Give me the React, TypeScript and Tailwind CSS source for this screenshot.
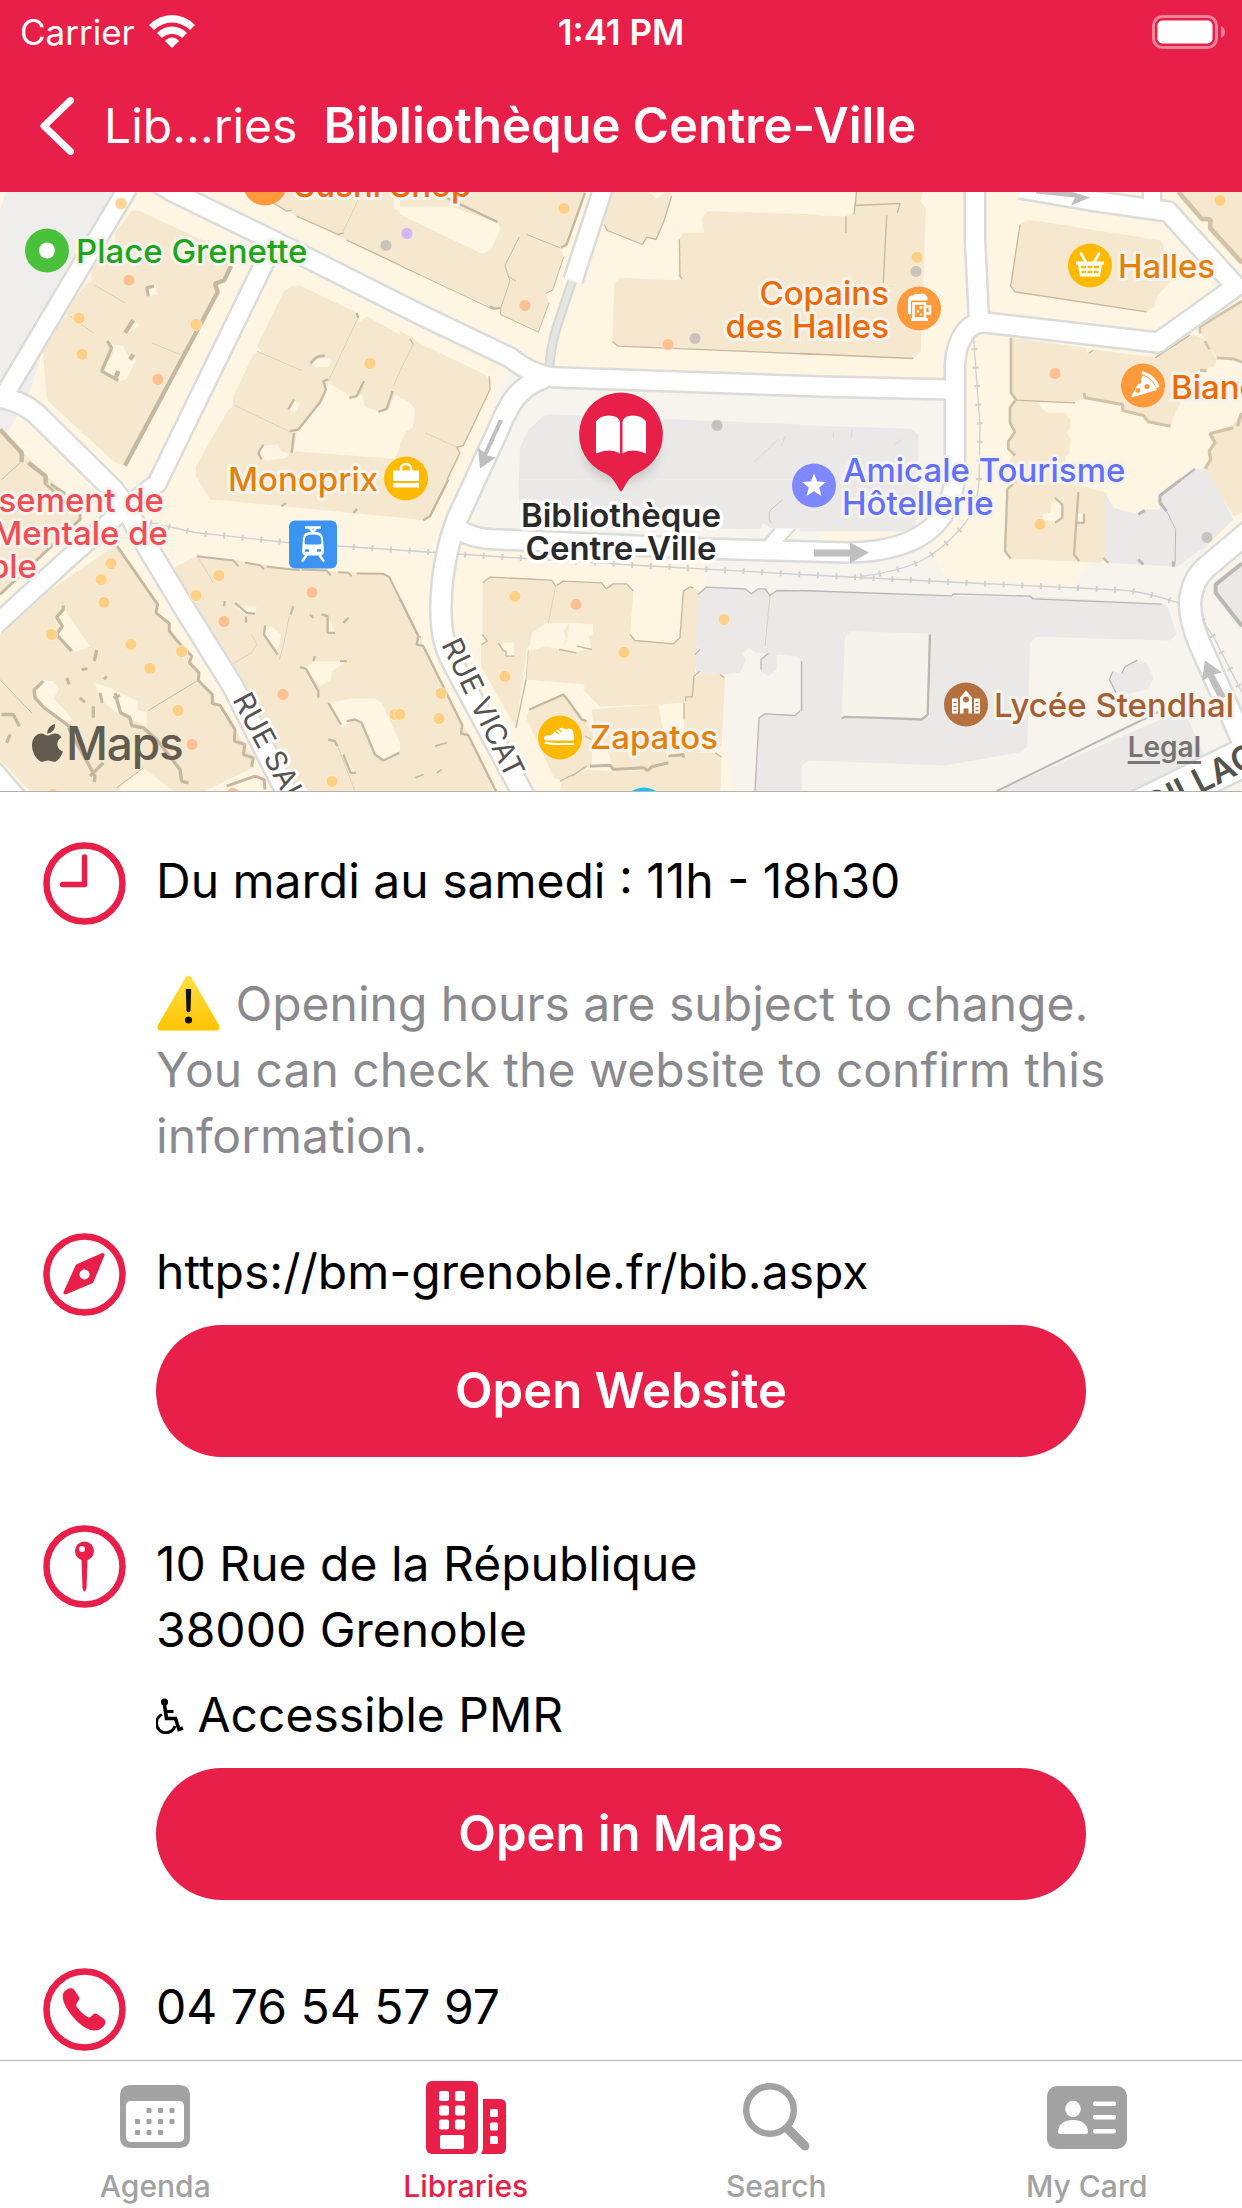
import type { ReactNode } from "react";

const LAND = "#f6e8ce";
const CREAM = "#fff5e3";
const GROUND = "#f6f4ec";
const GREY = "#eae9e7";
const SHADOW = "#c6b8a0";
const GREY_SHADOW = "#b9b8b5";

/* ---------- map data ---------- */

type Tile = {
  x: number;
  y: number;
  shapes: [string, string][];
  edges: [string, number, string][];
  dots: [number, number, string][];
};

const Y = "#fdd085";
const O = "#fcc092";
const G = "#cbc3ba";
const P = "#d3b6f0";

const tiles: Tile[] = [
  {
    x: 0,
    y: 180,
    shapes: [
      ["M0 0H440L250 310 130 500 90 640 0 800Z", "#efeeed"],
      ["M0 37H18L0 90Z", CREAM],
      ["M440 37 250 320 80 650 400 900 560 640 800 200Z", CREAM],
      ["M395 95Q412 88 430 100L700 225 700 260 675 300 645 312 655 340 375 858 345 850 145 665Q138 655 138 640L128 505 180 415 200 410V385L260 312 275 305V265L345 185V160Z", LAND],
      ["M760 37H1260V290L870 100Z", LAND],
      ["M1185 37H1260V130L1180 85Z", CREAM],
      ["M850 340Q872 312 905 320L1070 400 1075 430 1100 410 1235 485 1260 500V960H630L588 890V860L685 690 700 680 698 655 760 525 785 515 770 500Z", LAND],
      ["M985 610 1060 655 1085 645 1095 680 1140 698 1165 690 1185 645 1240 670Q1250 690 1238 720L1243 742 1220 755 1185 838 880 815 890 760 960 670 980 630Z", CREAM],
      ["M320 490 370 500 385 530 410 540 380 598Q365 608 345 600L305 578 340 520Z", CREAM],
      ["M930 550Q950 525 970 530L995 543 985 562 950 563Z", CREAM],
      ["M875 660 900 672 885 700 865 690Z", CREAM],
      ["M780 800 830 795 845 815 868 822 860 835 800 843 780 835Z", CREAM],
      ["M445 325 465 315 473 345 450 350Z", CREAM],
      ["M400 425 420 437 385 460 372 455Z", CREAM],
      ["M0 750 70 820 130 880 200 945 200 960H0Z", LAND],
    ],
    edges: [
      ["M693 260 673 302 645 313 653 338 375 858", 13, SHADOW],
      ["M322 485 335 505 305 575 355 603", 10, SHADOW],
      ["M400 422 375 460M355 575 345 600M400 525 390 540", 13, SHADOW],
      ["M462 320 440 325 445 350", 9, SHADOW],
      ["M975 530Q950 525 932 552", 8, SHADOW],
      ["M985 600 970 605 978 630 960 668 895 750 870 755M882 760 875 820M1092 605 1070 650 1048 655M1178 635 1160 688 1135 697M1070 400 1075 415M1235 480 1238 495M790 795 775 820 785 840M882 660 865 690", 7, SHADOW],
      ["M820 70 860 95 875 92M890 110 1015 165 1032 160M1040 182 1260 285", 4, SHADOW],
      ["M1075 60 1030 155M1072 420 985 605M1235 500 1180 620M455 490 540 525M770 515 905 573M705 678 870 757M280 315 375 370M210 410 280 460", 2, "#cfc3ab"],
      ["M0 750 65 820V848M85 850 137 890V915M150 915 195 945", 13, SHADOW],
      ["M60 850 0 905", 3, SHADOW],
    ],
    dots: [
      [363, 72, "#fed596"],
      [387, 302, O],
      [237, 416, Y],
      [588, 435, Y],
      [246, 524, Y],
      [474, 600, O],
      [1110, 552, Y],
      [1221, 162, P],
      [1158, 198, G],
    ],
  },
  {
    x: 400,
    y: 180,
    shapes: [
      ["M0 37H555L545 80 500 200 480 205 300 140 0 0Z", LAND],
      ["M0 105 0 258 285 390 300 380 330 300 315 258 355 175 380 165 480 203 0 0Z", LAND],
      ["M0 80 150 80 295 130 300 150 272 212 245 222 0 105Z", CREAM],
      ["M315 258 358 172 380 165 482 205 491 232 458 332 437 342 447 370 415 458 302 408 300 385 330 305Z", LAND],
      ["M635 37H810L815 55 790 130 768 180 740 175 728 195 622 153 610 130Z", LAND],
      ["M750 40 795 40 770 57Z", CREAM],
      ["M905 115 922 95 1260 105V525L655 500 637 485 643 312 660 295 835 302 838 180 850 160 912 160Z", LAND],
      ["M325 575 380 595 300 650 270 700Z", GROUND],
      ["M400 620 1260 648V960H230L310 700Z", GROUND],
      ["M360 805 385 750 430 710 450 704 1260 737V960H355Z", GREY],
      ["M0 455 40 475 55 490 255 585Q275 610 268 635L190 800 175 810 180 830 120 960H0Z", LAND],
      ["M0 655Q45 670 44 700L38 745 20 755 0 790Z", CREAM],
    ],
    edges: [
      ["M555 40 545 68 500 195 483 205M140 55 293 128M300 385 283 388 270 380", 7, SHADOW],
      ["M0 258 280 390M380 165 480 205M358 172 315 258 330 305 302 385 302 405 415 458 447 370M437 342 458 332 491 232M325 290 348 305", 3, SHADOW],
      ["M612 135 622 153 728 195 740 173 768 180 790 130 815 50", 4, SHADOW],
      ["M637 485 655 500 1260 525M838 180 840 290 847 297", 4, SHADOW],
      ["M268 590 270 630 190 798 170 803 180 820 112 960M30 478 40 495", 4, SHADOW],
      ["M75 760 170 803M40 495 0 575", 2, "#cfc3ab"],
      ["M1060 850 1135 780M1155 770 1145 800", 2, "#d2d1ce"],
    ],
    dots: [
      [21, 162, P],
      [492, 87, Y],
      [375, 378, O],
      [804, 495, O],
      [885, 477, G],
      [951, 738, "#c2c2c0"],
    ],
  },
  {
    x: 800,
    y: 180,
    shapes: [
      ["M165 37H370L360 65 378 85 362 515 340 537 0 522V107L135 110 160 100Z", LAND],
      ["M660 135 685 120 1080 182 1092 200 1085 230 1112 305 1070 350 1065 380 1040 397 645 337 632 320Z", LAND],
      ["M0 655 435 660V960H0Z", GROUND],
      ["M0 737 335 748 355 765V960H0Z", GREY],
      ["M635 475 855 505 865 525 885 510 1065 535 1180 465 1215 480 1250 540 1245 560 1200 575 1130 690 1112 740 1045 730 1030 710 970 695 968 680 855 655 825 670 710 668 740 700H795L812 720 810 745 800 758 812 780 808 820 795 832 800 880 830 960H620V930L645 905V880L622 850 640 828 625 800 645 755 630 730V690L650 660 632 640Z", LAND],
      ["M1130 37H1326V255L1225 145 1225 118 1200 110Z", LAND],
      ["M1326 370V550L1250 535 1200 455V440Z", LAND],
      ["M1326 700V960H1260L1215 870 1235 820 1250 790 1230 760 1300 735Z", LAND],
      ["M1085 945 1180 867 1215 870 1265 960H1085Z", GREY],
      ["M840 935 900 937 895 960H835Z", LAND],
    ],
    edges: [
      ["M0 522 340 537M162 105 170 37M165 78 300 72 292 100M138 110V160M260 108 250 310M660 135 632 320 645 337 1040 397", 4, SHADOW],
      ["M1135 37 1205 118 1232 120 1230 145 1326 250", 14, "#d2c3a8"],
      ["M1326 365 1200 442V462M1215 485 1228 510M1250 535 1300 538 1326 548", 8, "#d2c3a8"],
      ["M633 475V640L648 660 630 685V730L645 757 625 785V808L645 828M645 885V905L622 930V960", 8, "#cdbfa7"],
      ["M648 662 825 670M865 522 880 512M1065 535 1170 467", 4, SHADOW],
      ["M852 640 855 655 968 675V693L1030 708 1045 727 1112 740M1200 572 1220 574", 9, "#d2c3a8"],
      ["M1325 700 1312 740M1300 745 1230 762 1245 790 1228 815 1232 840 1215 868M835 945 850 935", 10, "#d2c3a8"],
      ["M1185 868 1085 945", 7, GREY_SHADOW],
      ["M155 750V775M100 760V775M305 780 285 795M118 900V960", 2, "#d2d1ce"],
    ],
    dots: [
      [351, 233, Y],
      [348, 276, G],
      [1260, 63, "#fed184"],
      [765, 582, "#fcc092"],
    ],
  },
  {
    x: 0,
    y: 480,
    shapes: [
      ["M0 0H130L240 90V120L0 340Z", LAND],
      ["M350 195 470 370 475 400 510 430V455L565 530 595 570V605L640 640 645 675 700 745 760 830V865L560 960H0V465L160 325Z", LAND],
      ["M595 0H1260V120L640 60 620 40Z", LAND],
      ["M505 272 590 230 700 240 900 272 1150 282 1170 290 1260 470V960H900L720 640 600 430Z", LAND],
      ["M190 385 270 500 230 517 205 510 170 465 188 440 170 412Z", CREAM],
      ["M105 630 130 602 160 605 178 630 160 655 218 720 200 745 130 690Z", CREAM],
      ["M285 610 330 625 415 665 412 690 440 700V740L350 700 300 660Z", CREAM],
      ["M700 380 770 380 765 403 735 403Z", CREAM],
      ["M790 440 815 440 843 465 832 525 795 470Z", CREAM],
      ["M985 415 1005 455 980 462Z", CREAM],
      ["M915 565 945 545 1040 545 995 575 993 600 960 620Z", CREAM],
      ["M990 670 1060 656 1125 658 1145 670 1205 800 1195 820 1150 843 1125 825 1085 730 1060 720 1025 745Z", CREAM],
      ["M350 935 430 865 520 935Z", CREAM],
      ["M660 920 765 860 800 900 790 935Z", CREAM],
      ["M0 840 90 935H0Z", CREAM],
      ["M1030 825 1068 880 1048 883Z", CREAM],
    ],
    edges: [
      ["M135 0V12L240 105V120L0 345", 9, SHADOW],
      ["M350 198 473 375 468 400 508 432V455L545 500 575 530 568 550 597 580 595 603 637 645V672L660 677 705 750 703 785 735 795 730 825 760 835 755 862", 9, SHADOW],
      ["M190 378V390L170 413 187 440 170 465 215 515M290 512 283 545M130 605 102 632 105 655 133 685 210 742M30 765 20 790M280 680V715M345 640 362 700 390 715 395 738 430 745 470 780 540 870 545 905 565 910M205 745 285 890 283 908M310 850 270 890M5 705 40 705 58 740", 10, SHADOW],
      ["M0 600 95 700M350 925 430 865M445 693 590 605", 3, SHADOW],
      ["M590 230 700 243 715 260M735 250 780 257 792 270M800 262 900 272M905 270 980 273 992 288M1015 278 1045 280 1055 290M1070 282 1150 283 1168 293 1255 470", 6, SHADOW],
      ["M845 80 858 70M1060 100 1072 88", 7, SHADOW],
      ["M705 370 740 400 765 403M795 438 792 465 833 525M965 405 983 410V460H1005M880 380 872 405M900 563 918 568 955 635V655M945 530 940 545M1020 545H1040M985 670 1023 735M1040 725 1065 720 1085 730 1125 825 1150 843 1198 820M985 780 1005 785 1012 800M1030 825 1052 880H1068M1260 470 1250 495M672 380 674 365M738 430V412M1030 430 1045 415M930 405 940 415", 7, SHADOW],
      ["M680 920 765 890 792 900 795 930", 9, SHADOW],
      ["M595 235 640 310M868 410 850 500 838 540M755 465 770 495 755 520 695 555M1015 805 1065 935", 2, "#cfc3ab"],
      ["M240 655 255 668M200 595 208 615M320 590 312 600M300 640 307 670M340 655 360 648M245 570 262 568", 9, SHADOW],
    ],
    dots: [
      [333, 252, Y],
      [303, 300, Y],
      [312, 369, Y],
      [155, 465, Y],
      [393, 495, Y],
      [545, 516, Y],
      [450, 567, Y],
      [534, 693, Y],
      [576, 795, O],
      [699, 942, O],
      [159, 945, Y],
      [657, 288, Y],
      [588, 348, Y],
      [672, 426, O],
      [936, 339, O],
      [849, 645, O],
      [1185, 705, Y],
      [996, 906, Y],
    ],
  },
  {
    x: 400,
    y: 480,
    shapes: [
      ["M0 0H145L90 110 70 122 0 113Z", LAND],
      ["M225 0H1260V195L400 160 220 150Z", GROUND],
      ["M355 0H1260V150L360 140Z", GREY],
      ["M1090 130 1112 146H1260V190L1060 190Z", GROUND],
      ["M910 240 1260 250V960H1010L970 780Z", GROUND],
      ["M0 355 60 475 70 500 190 740 205 765 290 935H0Z", LAND],
      ["M248 310 270 293 455 302 467 320 445 430 395 460 390 495 380 510 348 745 243 560V495L260 485 247 465Z", LAND],
      ["M467 320 490 305 605 310 618 328 640 313H680L700 335 690 465 705 483 820 493 840 475 850 335 870 322 900 335 885 580 880 645 857 650 852 670 780 675 600 680 550 630 555 615 378 600 385 515 440 500 480 510 500 480 490 455 510 430 445 430Z", LAND],
      ["M510 430 580 435 578 465 565 470 575 505 530 520 480 505 500 485Z", CREAM],
      ["M405 455 440 430 455 440 430 465 435 500 390 500Z", CREAM],
      ["M305 490H343V530H315Z", CREAM],
      ["M378 715 388 690 490 645 580 750 575 855 515 890 480 900 462 895Z", LAND],
      ["M575 690 700 680 775 675 790 760 805 845 740 870 640 865 625 820 590 790Z", LAND],
      ["M855 650 880 600 905 580 970 585 975 600 965 800 850 830Z", LAND],
      ["M480 935 485 905 560 870 640 875 740 872 850 820 940 820 965 835 962 935Z", LAND],
      ["M895 345 918 323 1035 328 1055 340 1075 328 1095 330 1110 345 1130 333 1260 335V935H1065L1077 715 1095 705 1185 708 1202 690 1205 545 1190 530 1130 525 1130 570 1105 590 1083 575V540L1100 520 1070 520 1045 505 1028 522 1038 540 1020 580 975 585 890 578 885 560V520L900 510 888 500Z", GREY],
      ["M1205 860 1225 843H1260V935H1200Z", GROUND],
    ],
    edges: [
      ["M0 358 55 470 50 495 70 500 187 737 183 762 205 767 288 935M145 0 90 110 70 122M388 690 490 645 510 670 545 720 560 725", 7, SHADOW],
      ["M248 310 270 293 455 302 467 320M470 318 490 305 605 310 618 328 640 313H680L700 335M690 465 705 483 820 493 840 475 850 335 870 322 880 325M247 465 262 485 245 495M378 600 348 745M857 665V652H877L882 590 900 575M477 510 530 520M530 500 575 510M295 490 310 515H318V530H343", 4, SHADOW],
      ["M852 670V720M555 770 575 780M960 585 973 595M945 820 965 832M515 890 560 860M480 905 520 885", 4, SHADOW],
      ["M570 860 630 857 640 870 730 865 743 873 755 862 805 850M805 830 850 825V835", 9, SHADOW],
      ["M895 345 918 323 1035 328 1055 343 1075 328H1095L1110 348 1130 333 1260 335M1065 935 1077 715 1095 703 1185 708 1202 692V545M1083 570V540L1105 522M900 510 885 525", 4, GREY_SHADOW],
      ["M1148 60 1108 95V120L1115 132", 3, "#c9c8c5"],
      ["M467 320 445 430M385 510 378 600M1110 350 1095 500", 2, "#cfc3ab"],
      ["M45 895 70 885M105 800 140 790M110 880 125 870", 5, SHADOW],
    ],
    dots: [
      [345, 351, Y],
      [528, 375, O],
      [672, 519, Y],
      [315, 591, Y],
      [123, 642, Y],
      [117, 717, Y],
      [972, 420, "#fad08f"],
      [0, 705, Y],
    ],
  },
  {
    x: 800,
    y: 480,
    shapes: [
      ["M0 0H430V120L330 160 0 150Z", GROUND],
      ["M0 0H355L350 110 340 155 0 155Z", GREY],
      ["M0 240 200 250 390 200 440 300 820 320 870 250 1130 262 1225 195 1326 220V960H0Z", GROUND],
      ["M620 20 640 10 830 15 920 40 915 240 900 250 820 245 635 237 612 215Z", LAND],
      ["M755 70 770 55 790 75 785 120 765 130 730 120 728 105 752 100Z", CREAM],
      ["M828 103H850V133H828Z", CREAM],
      ["M915 40 940 85 1015 105 1040 90H1080L1075 60 1145 0H1240L1300 120 1225 195 1130 262 915 250Z", GREY],
      ["M1235 0H1326V100L1300 110Z", LAND],
      ["M0 333 450 350 690 350 1085 372 1105 385 1130 465 1110 483 710 472 690 490 682 800 660 818 435 858 25 843 5 860V935H0Z", GREY],
      ["M135 475 150 455 385 462 390 700 365 720 125 715Z", "#f6f3ea"],
      ["M928 600 940 575 965 585 975 560 1010 542 1040 552 1060 595 1045 630 1000 640 950 650Z", GREY],
      ["M590 935 1150 690 1215 830 1100 935Z", GREY],
      ["M1326 250V440L1243 340 1250 310Z", GREY],
    ],
    edges: [
      ["M640 12 622 30 615 215 632 237M835 38 822 225 838 245M765 55 787 75V115L765 130M852 103V130H830M910 235 925 250", 7, "#cbbda5"],
      ["M1143 0 1080 48V70L1100 95M1015 105 1035 92M1015 240 1030 255M1120 245V262", 9, GREY_SHADOW],
      ["M1100 95 1127 150 1125 255", 3, GREY_SHADOW],
      ["M0 333 455 349 460 343 690 350 698 358 1085 374", 4, GREY_SHADOW],
      ["M390 465 383 705 365 720 262 716 135 712 125 717", 7, GREY_SHADOW],
      ["M5 545V695M965 583 975 562 1012 542M938 577 928 600 948 640", 4, GREY_SHADOW],
      ["M590 935 1090 690", 6, GREY_SHADOW],
      ["M1326 252 1247 315V340L1326 440", 12, GREY_SHADOW],
    ],
    dots: [
      [720, 135, Y],
      [1221, 174, "#c5c4c2"],
    ],
  },
];

const roads: [string, number][] = [
  ["M128 188 6 393", 17],
  ["M-5 397Q20 400 37 415L113 490 123 503 147 547 187 613 233 687 290 800", 19],
  ["M267 258 157 484 127 507 67 560-5 626", 17],
  ["M150 178 172 192 267 238 420 315 510 358Q535 378 560 378L820 387 950 390", 18],
  ["M604 186 573 281", 17],
  ["M545 378Q523 385 511 404 503 418 497 433L457 520Q442 560 441 605 440 640 452 662L526 800", 19],
  ["M455 527Q470 540 500 540L700 549 850 553Q905 552 932 528 950 512 955 480L955 365Q956 345 965 333 972 323 985 323L1158 343 1236 287 1168 212 1090 201 1020 189", 18],
  ["M975 186V240L979 322", 18],
  ["M1152 186V205", 16],
  ["M1250 531 1206 568Q1192 580 1190 603 1190 622 1200 645L1242 740", 20],
  ["M1140 809 1260 750", 36],
  ["M-8 770 18 800", 18],
];

const rails = [
  "M150 523 195 533 287 543 420 552 510 558 640 566 820 576 960 583 1110 590Q1140 590 1180 604",
  "M973 330 980 427 979 480Q978 510 960 530 940 552 920 562 895 573 860 577",
  "M1202 620 1215 640 1242 693",
];

const arrows = [
  "M503 421 487 456 496 458 480 469 478 448 484 453 499 420Z",
  "M814 550H850V543L869 553 850 564V557H814Z",
  "M1036 190 1071 192 1090 198 1071 206 1075 198 1036 194Z",
  "M1205 661 1222 673 1214 675 1226 697 1219 700 1208 678 1202 681Z",
];

const labels: [string, number, number, string, "start" | "middle" | "end"][] = [
  ["Place Grenette", 76, 263, "#1ea51c", "start"],
  ["Sushi Shop", 294, 197, "#f06a00", "start"],
  ["Monoprix", 228, 491, "#e2820b", "start"],
  ["Copains", 889, 305, "#ed6a05", "end"],
  ["des Halles", 889, 338, "#ed6a05", "end"],
  ["Halles", 1118, 278, "#e2820b", "start"],
  ["Bianca", 1171, 399, "#ed6a05", "start"],
  ["Amicale Tourisme", 843, 482, "#6470ff", "start"],
  ["Hôtellerie", 842, 515, "#6470ff", "start"],
  ["sement de", 164, 512, "#f24d55", "end"],
  ["Mentale de", 168, 545, "#f24d55", "end"],
  ["ble", 37, 578, "#f24d55", "end"],
  ["Zapatos", 590, 749, "#e2820b", "start"],
  ["Lycée Stendhal", 994, 717, "#a55f33", "start"],
];

function Poi({ x, y, color, children }: { x: number; y: number; color: string; children?: ReactNode }) {
  return (
    <g transform={`translate(${x} ${y})`}>
      <circle r="22" fill={color} />
      {children}
    </g>
  );
}

function MapDrawing() {
  return (
    <svg
      className="block h-full w-full font-[Inter,sans-serif]"
      viewBox="0 192 1242 600"
      preserveAspectRatio="xMidYMid slice"
      role="img"
      aria-label="Map around Bibliothèque Centre-Ville"
    >
      <rect y="180" width="1242" height="620" fill={CREAM} />
      {tiles.map((t, i) => (
        <g key={i} transform={`translate(${t.x} ${t.y}) scale(0.33333)`}>
          {t.shapes.map(([d, fill], j) => (
            <path key={j} d={d} fill={fill} />
          ))}
          {t.edges.map(([d, w, c], j) => (
            <path key={j} d={d} fill="none" stroke={c} strokeWidth={w} strokeLinejoin="bevel" />
          ))}
        </g>
      ))}
      <path d="M572 282 557 327Q551 345 549 370" fill="none" stroke="#d5d7d3" strokeWidth="10" />
      <path d="M572 282 557 327Q551 345 549 370" fill="none" stroke="#e4e6e1" strokeWidth="6" />
      {roads.map(([d, w]) => (
        <path key={d} d={d} fill="none" stroke="#dadcda" strokeWidth={w + 5} strokeLinejoin="round" />
      ))}
      {rails.map((d) => (
        <g key={d} fill="none" stroke="#cfd0cf">
          <path d={d} strokeWidth="1.3" />
          <path d={d} strokeWidth="6" strokeDasharray="2 16.6" />
        </g>
      ))}
      <path d="M759 545 773 529H797L781 546Z" fill="#dadcda" />
      {roads.map(([d, w]) => (
        <path key={d} d={d} fill="none" stroke="#fff" strokeWidth={w} strokeLinejoin="round" />
      ))}
      <path d="M760 548 776 529H794L777 548Z" fill="#fff" />
      {arrows.map((d) => (
        <path key={d} d={d} fill="#bfbfbf" />
      ))}
      {tiles.map((t, i) => (
        <g key={i} transform={`translate(${t.x} ${t.y}) scale(0.33333)`}>
          {t.dots.map(([x, y, c], j) => (
            <circle key={j} cx={x} cy={y} r="18" fill={c} stroke="#fff3e0" strokeWidth="2" />
          ))}
        </g>
      ))}

      <g stroke="#fff" strokeWidth="6" strokeLinejoin="round" paintOrder="stroke" fill="#55534f">
        <text transform="translate(441 645) rotate(64)" fontSize="29" fontWeight="400">
          RUE VICAT
        </text>
        <text transform="translate(232 700) rotate(62)" fontSize="29" fontWeight="400">
          RUE SAINT
        </text>
        <text transform="translate(1260 764) rotate(-27)" fontSize="34" fontWeight="600" textAnchor="end">
          CONDILLAC
        </text>
      </g>

      <Poi x={47} y={251} color="#4ac13b">
        <circle r="8" fill="#fff" />
      </Poi>
      <Poi x={265} y={184} color="#ff9a3c" />
      <Poi x={644} y={810} color="#12c4f7" />
      <Poi x={406} y={479} color="#ffba00">
        <path d="M-13-8H13V2.500H-13ZM-13 4.500H13V9H-13Z" fill="#fff" />
        <path d="M-5-7V-10A5 4.500 0 0 1 5-10V-7" fill="none" stroke="#fff" strokeWidth="2.400" />
      </Poi>
      <Poi x={919} y={309} color="#ff9a3c">
        <path
          d="M-11 5V-8Q-11-13-6-13Q-4-16 0-14Q5-17 8-12Q10-9 7-8H-8V5Q-9.500 7-11 5Z"
          fill="#fff"
        />
        <path d="M-5.500-5H6V10H-5.500ZM6.500-2H11V5H6.500" fill="none" stroke="#fff" strokeWidth="2.600" />
        <path d="M-8 11H9" stroke="#fff" strokeWidth="3" />
        <circle cx="2" cy="-1" r="1.500" fill="#fff" />
        <circle cx="-1" cy="3" r="1.200" fill="#fff" />
        <circle cx="2" cy="6" r="1" fill="#fff" />
      </Poi>
      <Poi x={1090} y={266} color="#ffba00">
        <path d="M-14-4H14V-1H12L10 11H-10L-12-1H-14Z" fill="#fff" />
        <path d="M-9-12-4-3M9-12 4-3" stroke="#fff" strokeWidth="2.600" strokeLinecap="round" />
        <path d="M-9 1.500H-4M-2.500 1.500H2.500M4 1.500H9M-8.500 6.500H-4M-2.500 6.500H2.500M4 6.500H8.500" stroke="#ffba00" strokeWidth="2.400" />
      </Poi>
      <Poi x={1143} y={386} color="#ff9a3c">
        <path d="M-11 11 0-9Q9-6 13 4Z" fill="#fff" stroke="#fff" strokeWidth="1.500" strokeLinejoin="round" />
        <path d="M-1-13Q12-9 15 2" fill="none" stroke="#fff" strokeWidth="3" />
        <circle cx="4" cy="1" r="2.600" fill="#ff9a3c" />
        <circle cx="-5" cy="5" r="2.400" fill="#ff9a3c" />
        <circle cx="-4" cy="-4" r="2.400" fill="#ff9a3c" />
      </Poi>
      <Poi x={814} y={486} color="#8088ff">
        <path d="M0-12 3.200-4 12-3.500 5.200 2 7.500 10.500 0 5.800-7.500 10.500-5.200 2-12-3.500-3.200-4Z" fill="#fff" />
      </Poi>
      <Poi x={560} y={738} color="#ffba00">
        <path
          d="M-16 0Q-15-3-10-2Q-7-3-5-6L-2-3-1-4-4-7-2-8 1-5 2-6-1-9 2-10Q6-7 9-9Q12-9 13-6Q14-3 14 2V3H-14Q-16 3-16 0Z"
          fill="#fff"
        />
        <path d="M-15 5Q-10 6.500-4 6.500H14" fill="none" stroke="#fff" strokeWidth="2" />
      </Poi>
      <Poi x={966} y={705} color="#b5703f">
        <path d="M-14-6H-8V9H-14ZM8-6H14V9H8ZM-6-7 0-14 6-7V9H2.500V4H-2.500V9H-6Z" fill="#fff" />
        <circle cy="-5" r="3" fill="#b5703f" />
        <path d="M-12.500-2H-9.500M-12.500 2H-9.500M-12.500 6H-9.500M9.500-2H12.500M9.500 2H12.500M9.500 6H12.500" stroke="#b5703f" strokeWidth="1.500" />
      </Poi>
      <g transform="translate(289 521)">
        <rect width="48" height="48" rx="6" fill="#3c93f0" />
        <path d="M16 7H32M20 7 24 11 28 7M13 41 18 34M35 41 30 34" stroke="#fff" strokeWidth="2.400" fill="none" />
        <path d="M14 18Q14 11 24 11Q34 11 34 18L35 31Q35 35 31 35H17Q13 35 13 31Z" fill="#fff" />
        <path d="M16 18Q16 14 24 14Q32 14 32 18L32.500 22Q32.500 24 30 24H18Q15.500 24 15.500 22Z" fill="#3c93f0" />
        <path d="M16 30H20M28 30H32" stroke="#3c93f0" strokeWidth="2.400" />
      </g>

      <g fontSize="33" fontWeight="500" stroke="#f5f3ee" strokeWidth="6" strokeLinejoin="round" paintOrder="stroke">
        {labels.map(([text, x, y, fill, anchor]) => (
          <text key={text + y} x={x} y={y} fill={fill} textAnchor={anchor}>
            {text}
          </text>
        ))}
      </g>

      <g>
        <ellipse cx="621" cy="451" rx="36" ry="30" fill="#00000030" className="blur-[6px]" />
        <path
          d="M621 393a42 42 0 0 1 16 80.800Q630 477 625 486 622 492 621 492T617 486Q612 477 605 473.800A42 42 0 0 1 621 393Z"
          fill="#e81f48"
        />
        <path
          d="M596 422Q600 416 609 416T620 422V454Q615 451 609 451T596 454ZM646 422Q642 416 633 416T622.500 422V454Q627 451 633 451T646 454Z"
          fill="#fff"
        />
      </g>
      <g fontSize="33" fontWeight="600" fill="#2a2a2a" stroke="#fff" strokeWidth="7" strokeLinejoin="round" paintOrder="stroke" textAnchor="middle">
        <text x="621" y="527">Bibliothèque</text>
        <text x="621" y="560">Centre-Ville</text>
      </g>
    </svg>
  );
}

/* ---------- interface icons ---------- */

function RoundIcon({ children }: { children: ReactNode }) {
  return (
    <svg className="size-[83px] shrink-0 text-[#e81f48]" viewBox="0 0 83 83" fill="none" aria-hidden="true">
      <circle cx="41.500" cy="41.500" r="38" stroke="currentColor" strokeWidth="6.500" />
      {children}
    </svg>
  );
}

const ClockIcon = () => (
  <RoundIcon>
    <path d="M41.500 15V42.500H19.500" stroke="currentColor" strokeWidth="5.500" strokeLinecap="round" strokeLinejoin="round" />
  </RoundIcon>
);

const CompassIcon = () => (
  <RoundIcon>
    <path d="M59.500 22 34.500 33 22.500 59.500 48.500 48.500Z" fill="currentColor" stroke="currentColor" strokeWidth="4" strokeLinejoin="round" />
    <circle cx="41.500" cy="41.500" r="5" fill="#fff" />
  </RoundIcon>
);

const PinIcon = () => (
  <RoundIcon>
    <circle cx="41.500" cy="26" r="9.500" fill="currentColor" />
    <circle cx="39" cy="24" r="3" fill="#fff" />
    <path d="M38.500 34H44.500L43.500 63Q41.500 70 39.500 63Z" fill="currentColor" />
  </RoundIcon>
);

const PhoneIcon = () => (
  <RoundIcon>
    <path
      d="M21 24C23 21 28 18.500 31 21.500L36 29C38 33 32 34 33.500 38.500C37 43.500 41 47 45.500 49.500C49 50.500 49.500 44 54 46L60.500 50.500C64 53 62 57 60 59C55 64 48 63 42 59.500C34 54.500 27 46.500 22.500 38C19.500 32 19 27 21 24Z"
      fill="currentColor"
    />
  </RoundIcon>
);

const WarningIcon = () => (
  <svg className="inline-block h-[56px] w-[66px] align-[-10px]" viewBox="0 0 66 56" role="img" aria-label="Warning">
    <defs>
      <linearGradient id="warning" x1="0" y1="0" x2="0" y2="1">
        <stop offset="0" stopColor="#ffdf45" />
        <stop offset="1" stopColor="#ffc400" />
      </linearGradient>
    </defs>
    <path d="M29.500 2.500Q32.500-1.500 35.500 2.500L63 50Q65 55 60.500 55.500H4.500Q0 55 2 50Z" fill="url(#warning)" />
    <path d="M29.800 14H35.200L34.500 36Q32.500 38.500 30.500 36Z" fill="#111" />
    <circle cx="32.500" cy="45" r="3.600" fill="#111" />
  </svg>
);

const WheelchairIcon = () => (
  <svg className="inline-block h-[36px] w-[28px] align-[-2px]" viewBox="0 0 28 36" fill="none" stroke="#000" aria-hidden="true">
    <circle cx="8.500" cy="4" r="3.600" fill="#000" stroke="none" />
    <path d="M8.500 7 10.500 20.500H19.500L23 31.500 27 30" strokeWidth="3.600" />
    <path d="M10.500 13.500H17.500" strokeWidth="3" />
    <path d="M6 16.500A9.500 9.500 0 1 0 19 28" strokeWidth="3" />
  </svg>
);

const AgendaIcon = () => (
  <svg className="h-[64px] w-[70px]" viewBox="0 0 70 64" fill="currentColor" aria-hidden="true">
    <path
      fillRule="evenodd"
      d="M11 0H59Q70 0 70 11V52Q70 63 59 63H11Q0 63 0 52V11Q0 0 11 0ZM11 16Q6 16 6 21V52Q6 57 11 57H59Q64 57 64 52V21Q64 16 59 16Z"
    />
    {[26.5, 38, 49.5].map((x) => (
      <rect key={x} x={x} y="23" width="5" height="5" rx="1" />
    ))}
    {[15, 26.5, 38, 49.5].map((x) => (
      <rect key={x} x={x} y="34" width="5" height="5" rx="1" />
    ))}
    {[15, 26.5, 38].map((x) => (
      <rect key={x} x={x} y="45" width="5" height="5" rx="1" />
    ))}
  </svg>
);

const LibrariesIcon = () => (
  <svg className="h-[73px] w-[80px]" viewBox="0 0 80 73" fill="currentColor" aria-hidden="true">
    <rect width="52" height="73" rx="6" />
    <path d="M57 18H74Q80 18 80 24V67Q80 73 74 73H55Q57 70 57 66Z" />
    <g fill="#fff">
      {[10, 24.5, 38.5].map((y) => (
        <g key={y}>
          <rect x="13" y={y} width="10" height="10" rx="2" />
          <rect x="29" y={y} width="10" height="10" rx="2" />
        </g>
      ))}
      <rect x="14" y="54" width="24" height="14" rx="2" />
      {[28, 41.5, 55].map((y) => (
        <rect key={y} x="64" y={y} width="8" height="8" rx="1.500" />
      ))}
    </g>
  </svg>
);

const SearchIcon = () => (
  <svg className="h-[68px] w-[67px]" viewBox="0 0 67 68" fill="none" stroke="currentColor" aria-hidden="true">
    <circle cx="27" cy="27" r="23.800" strokeWidth="6.400" />
    <path d="M45 46 62 63" strokeWidth="9" strokeLinecap="round" />
  </svg>
);

const CardIcon = () => (
  <svg className="h-[63px] w-[80px]" viewBox="0 0 80 63" fill="currentColor" aria-hidden="true">
    <rect width="80" height="63" rx="10" />
    <g fill="#fff">
      <ellipse cx="26" cy="23" rx="7.800" ry="8.300" />
      <path d="M11 46Q12 34 26 34T41 46Q41 48 39 48H13Q11 48 11 46Z" />
      <rect x="46" y="15.500" width="23" height="4.500" rx="2" />
      <rect x="46" y="29" width="23" height="4.500" rx="2" />
      <rect x="46" y="43" width="23" height="4.500" rx="2" />
    </g>
  </svg>
);

/* ---------- layout ---------- */

function InfoRow({ icon, className, children }: { icon: ReactNode; className: string; children: ReactNode }) {
  return (
    <section className={`flex items-start gap-[30px] ${className}`}>
      {icon}
      <div className="min-w-0 flex-1 pt-[6px]">{children}</div>
    </section>
  );
}

function PillButton({ children }: { children: ReactNode }) {
  return (
    <button
      type="button"
      className="mt-5 block h-[132px] w-full rounded-full bg-[#e81f48] text-[49px] leading-[66px] font-semibold text-white"
    >
      {children}
    </button>
  );
}

function Tab({ icon, label, active = false }: { icon: ReactNode; label: string; active?: boolean }) {
  return (
    <button
      type="button"
      aria-current={active ? "page" : undefined}
      className={`flex flex-col items-center ${active ? "text-[#e81f48]" : "text-[#a2a2a2]"}`}
    >
      <span className="flex h-[112px] items-center justify-center">{icon}</span>
      <span className="text-[30px] leading-[26px] font-medium">{label}</span>
    </button>
  );
}

export default function App() {
  return (
    <div className="flex h-screen flex-col overflow-hidden bg-white font-[Inter,sans-serif] text-black">
      <header className="shrink-0 bg-[#e81f48] text-white">
        <div className="grid h-[64px] grid-cols-3 items-center px-[20px] text-[35px]">
          <div className="flex items-center gap-[14px]">
            <span>Carrier</span>
            <svg className="h-[34px] w-[46px]" viewBox="0 0 46 34" aria-label="Wi-Fi" role="img">
              <path d="M23 0Q36 0 46 10L41 15Q33 7.500 23 7.500T5 15L0 10Q10 0 23 0Z" fill="#fff" />
              <path d="M23 11.500Q32 11.500 38 18L33 23Q29 19 23 19T13 23L8 18Q14 11.500 23 11.500Z" fill="#fff" />
              <path d="M23 22.500Q27 22.500 30 26L23 33 16 26Q19 22.500 23 22.500Z" fill="#fff" />
            </svg>
          </div>
          <div className="text-center font-semibold">1:41 PM</div>
          <svg className="-mr-1 h-[34px] w-[74px] justify-self-end" viewBox="0 0 74 34" aria-label="Battery full" role="img">
            <rect x="1.500" y="1.500" width="63" height="31" rx="9" fill="none" stroke="#ffffff73" strokeWidth="3" />
            <rect x="5.500" y="5.500" width="55" height="23" rx="5" fill="#fff" />
            <path d="M69 11Q73 13 73 17T69 23Z" fill="#ffffff73" />
          </svg>
        </div>
        <div className="flex h-[128px] items-center pb-1 pl-[40px] leading-[60px]">
          <button type="button" className="flex items-center gap-[30px] text-[48px]">
            <svg className="h-[58px] w-[34px]" viewBox="0 0 34 58" fill="none" aria-hidden="true">
              <path d="M30.500 3.500 4 29 30.500 54.500" stroke="#fff" strokeWidth="7" strokeLinecap="round" strokeLinejoin="round" />
            </svg>
            Lib…ries
          </button>
          <h1 className="ml-[26px] text-[49px] font-semibold whitespace-nowrap">Bibliothèque Centre-Ville</h1>
        </div>
      </header>

      <div className="relative h-[600px] shrink-0 border-b border-[#b5b2ad]">
        <MapDrawing />
        <div className="absolute bottom-5 left-8 flex items-center gap-[3px] text-[#625c50]">
          <svg className="h-[38px] w-[31px]" viewBox="0 0 31 38" fill="currentColor" aria-hidden="true">
            <path d="M23 0Q23.500 4 21 6.800T15 9.500Q14.800 6 17.500 3.200 20 .6 23 0Z" />
            <path d="M15.500 11.500C18 11.500 20 9.500 23 9.500Q27.500 9.800 29.500 13.200C23 17 24.500 25.500 31 27.500Q28.500 34.500 24 37.500C20.500 38.500 19 36.500 16 36.500S11.500 38.500 8.500 37.500C3.500 35 0 27 0 21.500C0 13.500 5 9.500 9 9.500C12 9.500 13.500 11.500 15.500 11.500Z" />
          </svg>
          <span className="text-[46px] leading-[56px] font-medium tracking-tight">Maps</span>
        </div>
        <a href="#legal" className="absolute right-[41px] bottom-7 text-[28px] leading-8 font-semibold text-[#757472] underline decoration-[3px] underline-offset-4">
          Legal
        </a>
      </div>

      <main className="min-h-0 flex-1 overflow-hidden pt-[50px] pr-[84px] pl-[43px] text-[48px] leading-[66px]">
        <InfoRow icon={<ClockIcon />} className="">
          <p>Du mardi au samedi : 11h - 18h30</p>
          <p className="mt-[57px] text-[#8a8a8e]">
            <WarningIcon /> Opening hours are subject to change. You can check the website to confirm this information.
          </p>
        </InfoRow>
        <InfoRow icon={<CompassIcon />} className="mt-[64px] pr-[72px]">
          <p>https://bm-grenoble.fr/bib.aspx</p>
          <PillButton>Open Website</PillButton>
        </InfoRow>
        <InfoRow icon={<PinIcon />} className="mt-[68px] pr-[72px]">
          <p>
            10 Rue de la République
            <br />
            38000 Grenoble
          </p>
          <p className="mt-[19px]">
            <WheelchairIcon /> Accessible PMR
          </p>
          <PillButton>Open in Maps</PillButton>
        </InfoRow>
        <InfoRow icon={<PhoneIcon />} className="mt-[68px]">
          <p>04 76 54 57 97</p>
        </InfoRow>
      </main>

      <nav className="grid h-[148px] shrink-0 grid-cols-4 items-start border-t border-[#b2b2b2] bg-white">
        <Tab icon={<AgendaIcon />} label="Agenda" />
        <Tab icon={<LibrariesIcon />} label="Libraries" active />
        <Tab icon={<SearchIcon />} label="Search" />
        <Tab icon={<CardIcon />} label="My Card" />
      </nav>
    </div>
  );
}
